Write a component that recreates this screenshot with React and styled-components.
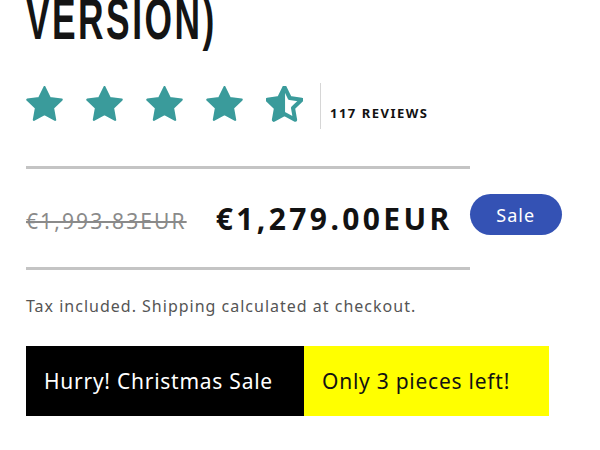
import React from "react";
import styled, { createGlobalStyle } from "styled-components";

const GlobalStyle = createGlobalStyle`
  html, body {
    margin: 0;
    padding: 0;
    background: #ffffff;
    overflow: hidden;
  }
  body {
    font-family: "Noto Sans", "Liberation Sans", sans-serif;
    color: #121212;
  }
`;

const Page = styled.div`
  width: 600px;
  height: 450px;
  padding: 0 26px;
  box-sizing: border-box;
  overflow: hidden;
`;

const Title = styled.h1`
  margin: -13px 0 0 0;
  font-family: "Liberation Sans", "Arial", sans-serif;
  font-weight: 700;
  font-size: 57px;
  line-height: 64px;
  letter-spacing: 4px;
  color: #141414;
  transform: scaleX(0.62);
  transform-origin: left center;
  white-space: nowrap;
`;

const RatingRow = styled.div`
  display: flex;
  align-items: center;
  margin-top: 32px;
  height: 46px;
`;

const Stars = styled.div`
  display: flex;
  gap: 23px;
  margin-top: -4px;
`;

const Divider = styled.div`
  width: 1px;
  height: 46px;
  background: #d6d6d6;
  margin: 0 9px 0 17px;
`;

const Reviews = styled.span`
  font-size: 13px;
  font-weight: 700;
  letter-spacing: 1.5px;
  margin-top: 14px;
`;

const Rule = styled.hr`
  border: none;
  height: 3px;
  background: #c4c4c4;
  width: 444px;
  margin: ${(p) => p.$top}px 0 0 0;
`;

const PriceRow = styled.div`
  display: flex;
  align-items: center;
  height: 98px;
`;

const OldPrice = styled.s`
  font-size: 21px;
  color: #8a8a8a;
  letter-spacing: 2.1px;
  margin-top: 6px;
`;

const NewPrice = styled.span`
  font-size: 30px;
  font-weight: 700;
  letter-spacing: 3.4px;
  margin-left: 29px;
`;

const Badge = styled.span`
  display: inline-flex;
  align-items: center;
  justify-content: center;
  width: 92px;
  height: 41px;
  border-radius: 21px;
  background: #3452b4;
  color: #ffffff;
  font-size: 18px;
  letter-spacing: 1px;
  margin-left: 17px;
  margin-top: -7px;
`;

const Note = styled.p`
  margin: 25px 0 0 0;
  font-size: 16px;
  color: #555;
  letter-spacing: 1px;
`;

const Banner = styled.div`
  display: flex;
  margin-top: 29px;
  height: 70px;
  width: 523px;
`;

const BannerPart = styled.div`
  display: flex;
  align-items: center;
  width: ${(p) => p.$w}px;
  padding-left: ${(p) => p.$pad}px;
  box-sizing: border-box;
  background: ${(p) => p.$bg};
  color: ${(p) => p.$fg};
  font-size: 21px;
  letter-spacing: 0.75px;
`;

const STAR = "M12 2.6l2.85 5.9 6.45.9-4.7 4.5 1.15 6.4L12 17.2l-5.75 3.1 1.15-6.4-4.7-4.5 6.45-.9z";

const Star = ({ half }) => (
  <svg width="37" height="36" viewBox="2 2 20 19.5">
    <defs>
      <clipPath id="halfclip">
        <rect x="0" y="0" width="12.3" height="24" />
      </clipPath>
    </defs>
    {half ? (
      <>
        <path d={STAR} fill="none" stroke="#3a9b9b" strokeWidth="2.2" strokeLinejoin="round" />
        <path d={STAR} fill="#3a9b9b" stroke="#3a9b9b" strokeWidth="1.2" strokeLinejoin="round" clipPath="url(#halfclip)" />
      </>
    ) : (
      <path d={STAR} fill="#3a9b9b" stroke="#3a9b9b" strokeWidth="1.2" strokeLinejoin="round" />
    )}
  </svg>
);

export default function App() {
  return (
    <>
      <GlobalStyle />
      <Page>
        <Title>VERSION)</Title>
        <RatingRow>
          <Stars>
            {[0, 1, 2, 3].map((i) => (
              <Star key={i} />
            ))}
            <Star half />
          </Stars>
          <Divider />
          <Reviews>117 REVIEWS</Reviews>
        </RatingRow>
        <Rule $top={37} />
        <PriceRow>
          <OldPrice>€1,993.83EUR</OldPrice>
          <NewPrice>€1,279.00EUR</NewPrice>
          <Badge>Sale</Badge>
        </PriceRow>
        <Rule $top={0} />
        <Note>Tax included. Shipping calculated at checkout.</Note>
        <Banner>
          <BannerPart $w={278} $pad={18} $bg="#000000" $fg="#ffffff">
            Hurry! Christmas Sale
          </BannerPart>
          <BannerPart $w={245} $pad={18} $bg="#ffff00" $fg="#121212">
            Only 3 pieces left!
          </BannerPart>
        </Banner>
      </Page>
    </>
  );
}
